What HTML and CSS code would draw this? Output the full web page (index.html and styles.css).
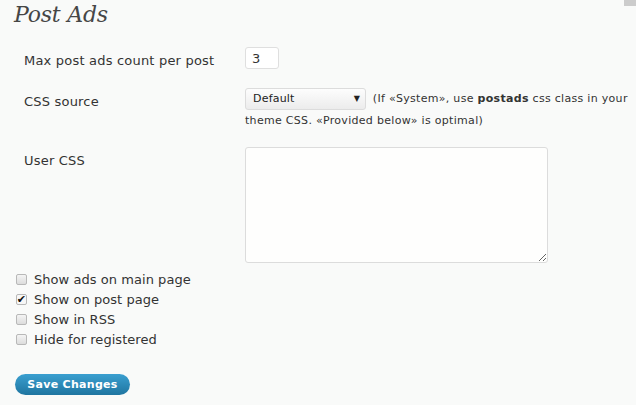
FILE: index.html
```html
<!DOCTYPE html>
<html lang="en">
<head>
  <meta charset="UTF-8">
  <title>Post Ads</title>
  <link rel="stylesheet" href="styles.css">
</head>
<body>
  <div class="corner"></div>
  <div class="wrap">
    <h2>Post Ads</h2>
    <form class="postads-form">
      <table class="form-table">
        <tr class="row-count">
          <th>Max post ads count per post</th>
          <td><input type="text" class="small-text" value="3"></td>
        </tr>
        <tr class="row-source">
          <th>CSS source</th>
          <td class="css-source">
            <span class="fake-select">Default<span class="arrow">&#9660;</span></span>
            (If «System», use <b>postads</b> css class in your theme CSS. «Provided below» is optimal)
          </td>
        </tr>
        <tr class="row-user">
          <th>User CSS</th>
          <td><textarea class="user-css"></textarea></td>
        </tr>
      </table>
      <div class="checks">
        <label><span class="box"></span>Show ads on main page</label>
        <label><span class="box checked">&#10004;</span>Show on post page</label>
        <label><span class="box"></span>Show in RSS</label>
        <label><span class="box"></span>Hide for registered</label>
      </div>
      <button type="button" class="button-primary">Save Changes</button>
    </form>
  </div>
</body>
</html>
```

FILE: styles.css
```css
* { margin: 0; padding: 0; box-sizing: border-box; }
body {
  font-family: 'DejaVu Sans', Verdana, sans-serif;
  font-size: 13px;
  letter-spacing: 0.2px;
  color: #333;
  background: #f9faf9;
  width: 636px;
  height: 405px;
  overflow: hidden;
  position: relative;
}
/* small grey tab in the top right corner */
.corner {
  position: absolute;
  top: 0;
  right: 0;
  width: 12px;
  height: 6px;
  background: #ccc;
}
.wrap { padding: 0 0 0 15px; }
h2 {
  font-family: 'DejaVu Serif', Georgia, serif;
  font-style: italic;
  font-weight: normal;
  font-size: 22px;
  letter-spacing: -0.2px;
  color: #464646;
  line-height: 30px;
  height: 30px;
  margin-left: -1px;
}
.form-table { border-collapse: collapse; margin-top: 14px; }
.form-table th {
  text-align: left;
  font-weight: normal;
  vertical-align: top;
  width: 230px;
  padding: 8px 0 0 9px;
  line-height: 18px;
}
.form-table td { vertical-align: top; padding: 3px 0 9px 0; }
.row-count td { padding-bottom: 16px; }
.row-source td { padding-bottom: 12px; }
.row-user td { padding-bottom: 6px; }
.small-text {
  width: 34px;
  height: 22px;
  border: 1px solid #dfdfdf;
  border-radius: 3px;
  background: #fff;
  font: 13px 'DejaVu Sans', sans-serif;
  color: #333;
  padding: 0 6px;
}
.css-source {
  font-size: 11px;
  letter-spacing: 0.3px;
  line-height: 22px;
  width: 391px;
}
.css-source b { font-weight: bold; }
.fake-select {
  display: inline-flex;
  align-items: center;
  justify-content: space-between;
  vertical-align: top;
  width: 121px;
  height: 22px;
  padding: 0 5px 0 7px;
  border: 1px solid #dcdcdc;
  border-radius: 3px;
  background: linear-gradient(#fdfdfd, #ececec);
  font-size: 11px;
  letter-spacing: 0.2px;
  color: #222;
  margin-right: 3px;
}
.arrow { font-size: 8px; color: #222; }
.user-css {
  display: block;
  width: 303px;
  height: 116px;
  border: 1px solid #dcdcdc;
  border-radius: 3px;
  background: #fefefd;
}
.checks {
  display: flex;
  flex-direction: column;
  letter-spacing: 0.05px;
}
.checks label {
  display: flex;
  align-items: center;
  height: 20px;
  gap: 7px;
}
.box {
  width: 11px;
  height: 11px;
  border: 1px solid #b8b8b8;
  border-radius: 2px;
  background: linear-gradient(#f4f4f4, #dcdcdc);
  font-size: 11px;
  line-height: 9px;
  color: #111;
  display: flex;
  align-items: center;
  justify-content: center;
  margin-left: 1px;
}
.box.checked { background: #f7f7f7; }
.button-primary {
  margin-top: 25px;
  width: 115px;
  height: 21px;
  border: none;
  border-radius: 11px;
  background: linear-gradient(#3a9fd0, #1f75a0);
  color: #fff;
  font: bold 11px 'DejaVu Sans', sans-serif;
  letter-spacing: 0.3px;
}
```
